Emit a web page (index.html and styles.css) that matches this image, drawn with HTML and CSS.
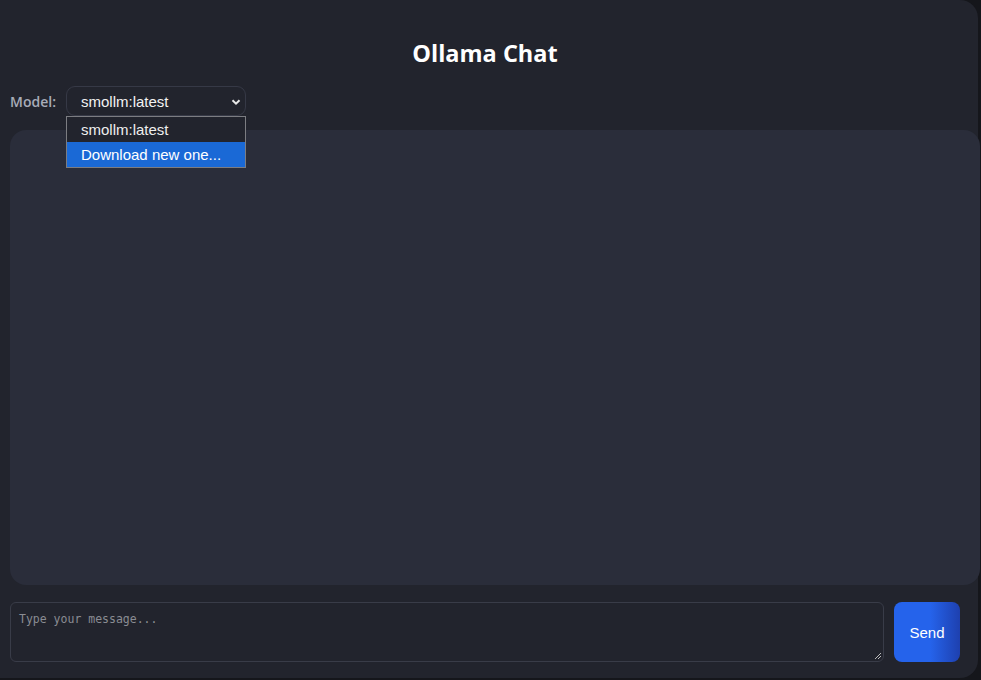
FILE: index.html
```html
<!DOCTYPE html>
<html>
<head>
<meta charset="utf-8">
<link rel="stylesheet" href="styles.css">
</head>
<body>
<div class="app">
  <h1 class="title">Ollama Chat</h1>
  <div class="model-row">
    <label class="model-label">Model:</label>
    <div class="select-wrap">
      <div class="select">
        <span>smollm:latest</span>
        <svg class="chev" width="12" height="12" viewBox="0 0 12 12"><path d="M2.5 4.2 L6 7.7 L9.5 4.2" fill="none" stroke="#e8e8e8" stroke-width="2"/></svg>
      </div>
      <div class="dropdown">
        <div class="opt">smollm:latest</div>
        <div class="opt active">Download new one...</div>
      </div>
    </div>
  </div>
  <div class="chat"></div>
  <div class="input-row">
    <div class="textarea">
      <span class="ph">Type your message...</span>
      <svg class="grip" width="9" height="9" viewBox="0 0 9 9"><path d="M8 2 L2 8 M8 5 L5 8" stroke="#bbb" stroke-width="1"/></svg>
    </div>
    <button class="send">Send</button>
  </div>
</div>
</body>
</html>
```
FILE: styles.css
```css
html, body { margin: 0; padding: 0; }
body {
  background: #15161b;
  width: 981px;
  height: 680px;
  overflow: hidden;
  font-family: "Liberation Sans", Arial, sans-serif;
}
.app {
  width: 978px;
  height: 678px;
  background: #22242d;
  border-radius: 0 18px 18px 0;
  display: flex;
  flex-direction: column;
  box-sizing: border-box;
  padding: 0 0 0 10px;
}
.title {
  margin: 0 8px 0 -10px;
  padding-top: 38px;
  height: 30px;
  text-align: center;
  font-family: "Open Sans", "Noto Sans", sans-serif;
  font-weight: 700;
  font-size: 23.5px;
  line-height: 30px;
  color: #ffffff;
}
.model-row {
  display: flex;
  align-items: center;
  margin-top: 18px;
  height: 30px;
}
.model-label {
  font-family: "Open Sans", "Noto Sans", sans-serif;
  font-weight: 600;
  font-size: 14px;
  color: #a8acb8;
  width: 56px;
}
.select-wrap { position: relative; }
.select {
  width: 180px;
  height: 30px;
  box-sizing: border-box;
  border: 1px solid #363946;
  border-radius: 9px;
  background: #22242d;
  display: flex;
  align-items: center;
  justify-content: space-between;
  padding: 0 3px 0 14px;
  color: #f2f2f2;
  font-size: 15px;
}
.chev { margin-top: 1px; }
.dropdown {
  position: absolute;
  left: 0;
  top: 30px;
  width: 180px;
  box-sizing: border-box;
  border: 1px solid #7c7d82;
  background: #22242d;
  z-index: 5;
}
.opt {
  height: 25px;
  line-height: 25px;
  padding-left: 14px;
  color: #eeeeee;
  font-size: 15px;
}
.opt.active { background: #1a69d6; color: #ffffff; }
.chat {
  margin-top: 14px;
  height: 455px;
  background: #2a2d3a;
  border-radius: 16px;
  margin-right: -2px;
}
.input-row {
  display: flex;
  margin-top: 17px;
  gap: 10px;
  padding-right: 18px;
  height: 60px;
}
.textarea {
  flex: 1;
  position: relative;
  box-sizing: border-box;
  border: 1px solid #393c48;
  border-radius: 6px;
  background: #22242d;
  padding: 6px 8px;
}
.ph {
  font-family: "DejaVu Sans Mono", "Liberation Mono", monospace;
  font-size: 11.5px;
  color: #8a8c93;
}
.grip { position: absolute; right: 1px; bottom: 1px; }
.send {
  width: 66px;
  height: 60px;
  border: none;
  border-radius: 8px;
  background: linear-gradient(90deg, #2563eb 0%, #2563eb 55%, #1e40af 100%);
  color: #ffffff;
  font-family: "Liberation Sans", Arial, sans-serif;
  font-size: 15px;
  padding: 0;
}
```
